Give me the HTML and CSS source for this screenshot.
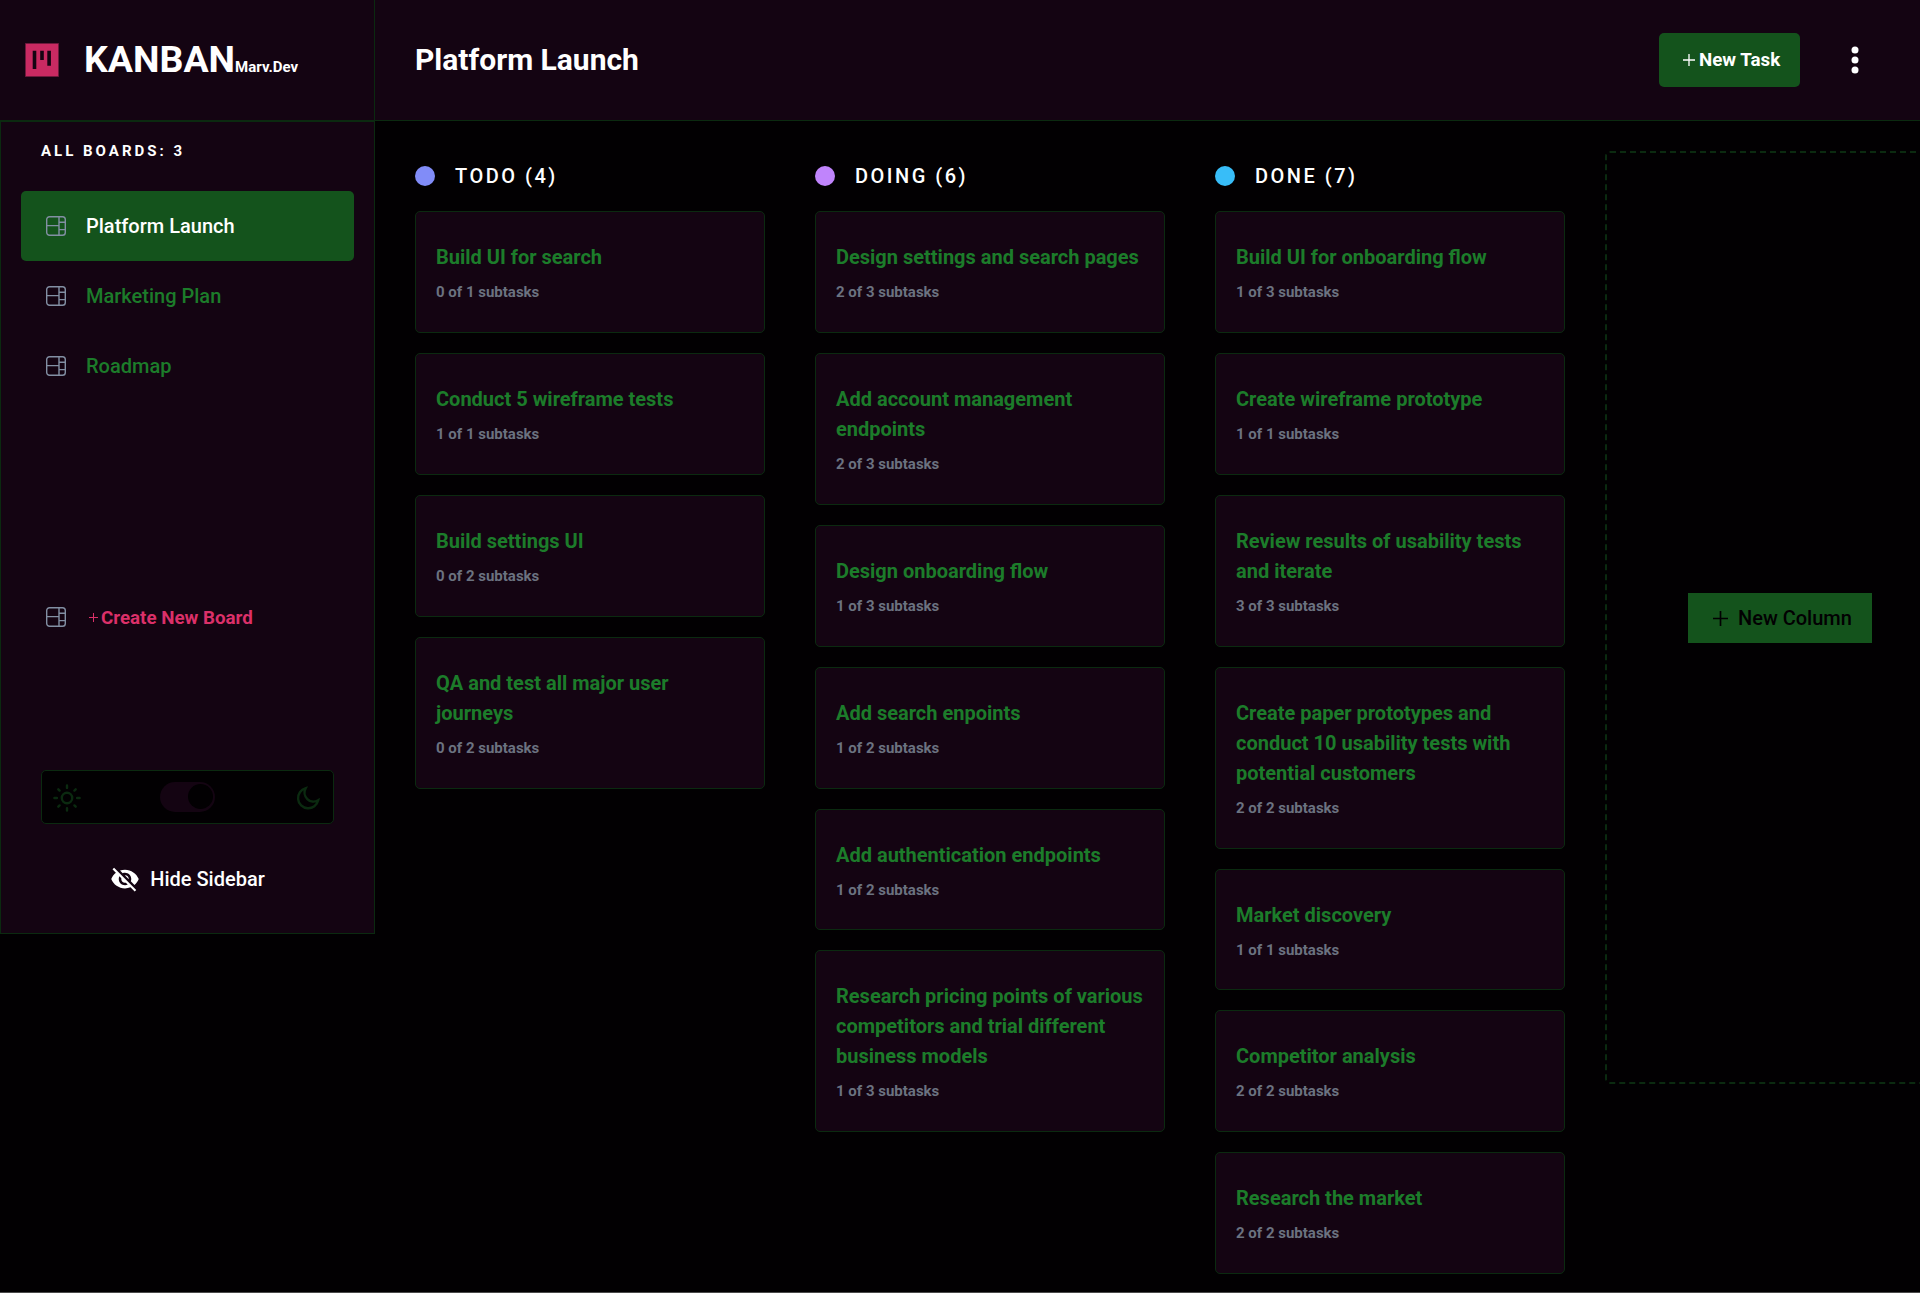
FILE: index.html
```html
<!DOCTYPE html>
<html lang="en">
<head>
<meta charset="utf-8">
<title>Kanban</title>
<link rel="stylesheet" href="styles.css">
</head>
<body>
<svg class="defs" aria-hidden="true">
  <symbol id="board" viewBox="0 0 20 20"><path d="M3.500.7h13a2.800 2.800 0 0 1 2.800 2.800v13a2.800 2.800 0 0 1-2.800 2.800h-13A2.800 2.800 0 0 1 .7 16.500v-13A2.800 2.800 0 0 1 3.500.7zM13 .7v18.600M.7 9.600H13M13 6.200h6.300M13 13.600h6.300" fill="none" stroke="currentColor" stroke-width="1.400"/></symbol>
  <symbol id="plus" viewBox="0 0 18 18"><path d="M9 1v16M1 9h16" fill="none" stroke="currentColor" stroke-width="2" stroke-linecap="square"/></symbol>
</svg>
<div class="app">
  <header class="header">
    <div class="brand">
      <svg class="brand-mark" viewBox="0 0 34 34"><path class="mark-bg" d="M.5.5h33v33H.5z"/><path class="mark-bar" d="M7.700 7.700h3.600v18.400H7.700zM15.200 7.700h3.600v9.400h-3.600zM22.300 7.700h3.600v15h-3.600z"/></svg>
      <h1 class="brand-name">KANBAN<span class="brand-by">Marv.Dev</span></h1>
    </div>
    <div class="topbar">
      <h2 class="board-title">Platform Launch</h2>
      <div class="actions">
        <button class="new-task"><svg class="plus-task"><use href="#plus"/></svg>New Task</button>
        <svg class="dots" viewBox="0 0 8 28"><circle cx="4" cy="4" r="3.500"/><circle cx="4" cy="14" r="3.500"/><circle cx="4" cy="24" r="3.500"/></svg>
      </div>
    </div>
  </header>
  <div class="body">
    <aside class="sidebar">
      <h3 class="boards-label">ALL BOARDS: 3</h3>
      <nav class="boards">
        <a class="board board-active"><svg class="board-icon"><use href="#board"/></svg>Platform Launch</a>
        <a class="board"><svg class="board-icon"><use href="#board"/></svg>Marketing Plan</a>
        <a class="board"><svg class="board-icon"><use href="#board"/></svg>Roadmap</a>
      </nav>
      <a class="board create"><svg class="board-icon"><use href="#board"/></svg><span class="create-label"><svg class="plus-create"><use href="#plus"/></svg>Create New Board</span></a>
      <div class="theme">
        <svg class="sun" viewBox="0 0 28 28"><circle cx="14" cy="14" r="5.200"/><path d="M14 1.400v2.500M14 24.100v2.500M1.400 14h2.500M24.100 14h2.500M5.300 5.300l1.300 1.300M21.400 21.400l1.300 1.300M5.300 22.700l1.300-1.300M21.400 6.600l1.300-1.300"/></svg>
        <span class="switch"><span class="knob"></span></span>
        <svg class="moon" viewBox="0 0 24 24"><path d="M9.700 2.200A10.200 10.200 0 1 0 22.200 14.300 9 9 0 0 1 9.700 2.200z"/></svg>
      </div>
      <button class="hide"><svg class="eye" viewBox="0 0 24 24"><path d="M12 7c2.760 0 5 2.240 5 5 0 .65-.13 1.260-.36 1.830l2.920 2.920c1.510-1.260 2.700-2.890 3.430-4.750-1.730-4.390-6-7.500-11-7.500-1.400 0-2.740.25-3.980.7l2.160 2.160C10.740 7.130 11.350 7 12 7zM2 4.270l2.280 2.280.46.46C3.080 8.300 1.780 10.020 1 12c1.730 4.390 6 7.500 11 7.500 1.550 0 3.030-.3 4.380-.84l.42.42L19.730 22 21 20.730 3.270 3 2 4.270zM7.530 9.800l1.550 1.550c-.05.21-.08.43-.08.65 0 1.660 1.340 3 3 3 .22 0 .44-.03.65-.08l1.550 1.550c-.67.33-1.410.53-2.200.53-2.760 0-5-2.240-5-5 0-.79.2-1.530.53-2.200zm4.310-.78 3.150 3.150.02-.16c0-1.660-1.340-3-3-3l-.17.01z"/></svg>Hide Sidebar</button>
    </aside>
    <main class="columns">
      <section class="column">
        <h3 class="column-head"><span class="dot dot-todo"></span>TODO (4)</h3>
        <article class="card"><h4 class="card-title">Build UI for search</h4><p class="card-sub">0 of 1 subtasks</p></article>
        <article class="card"><h4 class="card-title">Conduct 5 wireframe tests</h4><p class="card-sub">1 of 1 subtasks</p></article>
        <article class="card"><h4 class="card-title">Build settings UI</h4><p class="card-sub">0 of 2 subtasks</p></article>
        <article class="card"><h4 class="card-title">QA and test all major user journeys</h4><p class="card-sub">0 of 2 subtasks</p></article>
      </section>
      <section class="column">
        <h3 class="column-head"><span class="dot dot-doing"></span>DOING (6)</h3>
        <article class="card"><h4 class="card-title">Design settings and search pages</h4><p class="card-sub">2 of 3 subtasks</p></article>
        <article class="card"><h4 class="card-title">Add account management endpoints</h4><p class="card-sub">2 of 3 subtasks</p></article>
        <article class="card"><h4 class="card-title">Design onboarding flow</h4><p class="card-sub">1 of 3 subtasks</p></article>
        <article class="card"><h4 class="card-title">Add search enpoints</h4><p class="card-sub">1 of 2 subtasks</p></article>
        <article class="card"><h4 class="card-title">Add authentication endpoints</h4><p class="card-sub">1 of 2 subtasks</p></article>
        <article class="card"><h4 class="card-title">Research pricing points of various competitors and trial different business models</h4><p class="card-sub">1 of 3 subtasks</p></article>
      </section>
      <section class="column">
        <h3 class="column-head"><span class="dot dot-done"></span>DONE (7)</h3>
        <article class="card"><h4 class="card-title">Build UI for onboarding flow</h4><p class="card-sub">1 of 3 subtasks</p></article>
        <article class="card"><h4 class="card-title">Create wireframe prototype</h4><p class="card-sub">1 of 1 subtasks</p></article>
        <article class="card"><h4 class="card-title">Review results of usability tests and iterate</h4><p class="card-sub">3 of 3 subtasks</p></article>
        <article class="card"><h4 class="card-title">Create paper prototypes and conduct 10 usability tests with potential customers</h4><p class="card-sub">2 of 2 subtasks</p></article>
        <article class="card"><h4 class="card-title">Market discovery</h4><p class="card-sub">1 of 1 subtasks</p></article>
        <article class="card"><h4 class="card-title">Competitor analysis</h4><p class="card-sub">2 of 2 subtasks</p></article>
        <article class="card"><h4 class="card-title">Research the market</h4><p class="card-sub">2 of 2 subtasks</p></article>
      </section>
      <section class="add-column">
        <button class="new-column"><svg class="plus-column"><use href="#plus"/></svg>New Column</button>
      </section>
    </main>
  </div>
</div>
</body>
</html>
```
FILE: styles.css
```css
* { box-sizing: border-box; margin: 0; padding: 0; }
body { background: #020002; color: #fff; font-family: Roboto, sans-serif; font-size: 20px; line-height: 30px; overflow: hidden; }
h1, h2, h3, h4 { font-size: inherit; font-weight: inherit; }
button { border: 0; font: inherit; color: inherit; background: none; display: flex; align-items: center; }
svg { display: block; flex: none; }
.defs { width: 0; height: 0; position: absolute; }
.app { height: 1293px; display: flex; flex-direction: column; border-bottom: 1px solid #4a4a4a; }
.header { display: flex; height: 121px; flex: none; background: #140412; border-bottom: 1px solid #0b2a10; }
.brand { width: 375px; flex: none; display: flex; align-items: center; padding-left: 25px; gap: 25px; border-right: 1px solid #0b2a10; }
.brand-mark { width: 34px; height: 34px; }
.mark-bg { fill: #c92a62; stroke: #6e1a3c; }
.mark-bar { fill: #140412; }
.brand-name { font-size: 37.500px; font-weight: 700; line-height: 45px; margin-top: 6px; }
.brand-by { font-size: 15px; }
.topbar { flex: 1; display: flex; align-items: center; justify-content: space-between; padding: 0 61px 0 40px; }
.board-title { font-size: 30px; font-weight: 700; line-height: 36px; }
.actions { display: flex; align-items: center; gap: 51px; }
.new-task { width: 141px; height: 54px; padding-left: 24px; gap: 4px; border-radius: 5px; background: #14531c; font-size: 18.750px; font-weight: 700; }
.plus-task { width: 12px; height: 12px; }
.dots { width: 8px; height: 28px; fill: #fff; }
.body { flex: 1; min-height: 0; display: flex; align-items: flex-start; }
.sidebar { width: 375px; height: 813px; flex: none; display: flex; flex-direction: column; background: #140412; border: 1px solid #0b2a10; padding: 14px 20px 0; }
.boards-label { font-size: 15px; font-weight: 700; line-height: 30px; letter-spacing: 3px; padding-left: 20px; }
.boards { margin-top: 25px; }
.board { height: 70px; display: flex; align-items: center; gap: 20px; padding-left: 25px; border-radius: 5px; font-weight: 500; color: #1c7c2a; }
.board-active { background: #14531c; color: #fff; }
.board-icon { width: 20px; height: 20px; color: #828fa3; }
.create { margin-top: 181px; color: #db3069; }
.create-label { display: flex; align-items: center; gap: 3px; padding: 1px 0 0 3px; font-size: 18.750px; font-weight: 700; }
.plus-create { width: 9px; height: 9px; }
.theme { height: 54px; margin: 118px 20px 0; display: flex; align-items: center; justify-content: space-between; padding: 0 13px 0 11px; background: #020002; border: 1px solid #0b2a10; border-radius: 5px; }
.sun, .moon { margin-top: 2px; fill: none; stroke: #0b2a10; stroke-width: 2.400; stroke-linecap: round; }
.sun { width: 28px; height: 28px; }
.moon { width: 24px; height: 24px; }
.switch { width: 55px; height: 30px; padding: 2px; margin-right: 2px; border-radius: 15px; background: #140412; display: flex; justify-content: flex-end; }
.knob { width: 25px; height: 25px; border-radius: 50%; background: #020002; }
.hide { margin: 40px auto 0; gap: 10px; font-weight: 500; }
.eye { width: 30px; height: 30px; fill: #fff; }
.columns { flex: 1; display: flex; align-items: flex-start; padding: 30px 0 0 40px; }
.column { width: 350px; flex: none; margin-right: 50px; display: flex; flex-direction: column; gap: 20px; }
.column-head { display: flex; align-items: center; gap: 20px; height: 50px; margin-bottom: -10px; font-weight: 500; letter-spacing: 2.500px; }
.dot { width: 20px; height: 20px; border-radius: 50%; }
.dot-todo { background: #818cf8; }
.dot-doing { background: #c084fc; }
.dot-done { background: #38bdf8; }
.card { border: 1px solid #0b2a10; border-radius: 5px; background: #140412; padding: 30px 20px 29.880px; }
.card-title { color: #1c7c2a; font-weight: 700; line-height: 30px; }
.card-sub { margin-top: 10px; font-size: 15px; font-weight: 700; line-height: 20px; color: #6b7280; }
.add-column { width: 360px; height: 933px; flex: none; margin-left: -10px; padding-right: 10px; display: flex; align-items: center; justify-content: center; border: 2px dashed #0b2a10; border-radius: 5px; }
.new-column { width: 184px; height: 50px; padding-left: 25px; gap: 10px; background: #14531c; color: #020002; font-weight: 500; }
.plus-column { width: 15px; height: 15px; margin-top: 2px; }
```
